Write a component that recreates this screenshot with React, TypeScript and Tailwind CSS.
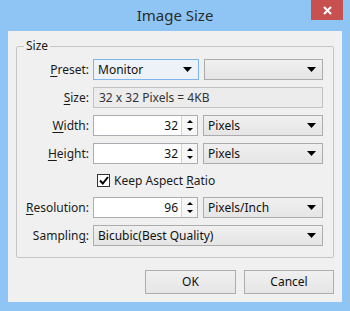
import React from "react";

const font = { fontFamily: '"Noto Sans", "Open Sans", sans-serif' };

function Arrow() {
  return (
    <svg width="9" height="5" viewBox="0 0 9 5" className="shrink-0">
      <path d="M0 0 H9 L4.5 5 Z" fill="#000" />
    </svg>
  );
}

function Label({ text, u, w = "w-[76px]" }: { text: string; u: number; w?: string }) {
  return (
    <span className={`${w} shrink-0 text-right pr-[4px] text-[12px] text-[#1a1a1a]`}>
      {text.slice(0, u)}
      <span className="underline underline-offset-2">{text[u]}</span>
      {text.slice(u + 1)}
    </span>
  );
}

function Combo({ value, w, focused }: { value?: string; w: string; focused?: boolean }) {
  return (
    <div
      className={`${w} h-[21px] flex items-center justify-between pl-[4px] pr-[6px] border text-[12px] text-[#111] ${
        focused ? "border-[#7eb4ea] bg-[#edf2f8]" : "border-[#acacac] bg-gradient-to-b from-[#f0f0f0] to-[#e5e5e5]"
      }`}
    >
      <span>{value}</span>
      <Arrow />
    </div>
  );
}

function Spin({ value }: { value: string }) {
  return (
    <div className="w-[105px] h-[21px] flex border border-[#abadb3] bg-white text-[12px] text-[#111]">
      <div className="flex-1 flex items-center justify-end pr-[3px]">{value}</div>
      <div className="w-[16px] flex flex-col items-center justify-center gap-[5px] border-l border-[#d4d4d4] bg-[#f7f7f7]">
        <svg width="6" height="3" viewBox="0 0 6 3">
          <path d="M0 3 H6 L3 0 Z" fill="#000" />
        </svg>
        <svg width="6" height="3" viewBox="0 0 6 3">
          <path d="M0 0 H6 L3 3 Z" fill="#000" />
        </svg>
      </div>
    </div>
  );
}

export default function App() {
  return (
    <div className="w-[350px] h-[311px] bg-[#8ec5f4] flex flex-col" style={font}>
      <div className="relative h-[31px] flex items-center justify-center">
        <span className="text-[15px] text-[#2b2b2b] -mt-[1px]">Image Size</span>
        <div className="absolute right-[7px] top-0 w-[32px] h-[20px] bg-[#c75050] flex items-center justify-center">
          <svg width="9" height="9" viewBox="0 0 9 9">
            <path d="M1 1 L8 8 M8 1 L1 8" stroke="#fff" strokeWidth="2" />
          </svg>
        </div>
      </div>
      <div className="mx-[8px] h-[271px] bg-[#f0f0f0] flex flex-col px-[8px] pt-[15px] pb-[8px]">
        <div className="relative border border-[#c6c6c6] rounded-[2px] pl-[0px] pt-[12px] pb-[11px] flex flex-col gap-[7px]">
          <span className="absolute left-[7px] -top-[9px] bg-[#f0f0f0] px-[2px] text-[12px] text-[#1a1a1a] leading-[16px]">
            Size
          </span>
          <div className="flex items-center">
            <Label text="Preset:" u={0} />
            <Combo value="Monitor" w="w-[106px]" focused />
            <div className="w-[5px]" />
            <Combo w="w-[119px]" />
          </div>
          <div className="flex items-center">
            <Label text="Size:" u={0} />
            <div className="w-[230px] h-[21px] flex items-center pl-[5px] border border-[#c2c2c2] bg-[#ececec] text-[12px] text-[#333]">
              32 x 32 Pixels = 4KB
            </div>
          </div>
          <div className="flex items-center">
            <Label text="Width:" u={0} />
            <Spin value="32" />
            <div className="w-[5px]" />
            <Combo value="Pixels" w="w-[120px]" />
          </div>
          <div className="flex items-center">
            <Label text="Height:" u={0} />
            <Spin value="32" />
            <div className="w-[5px]" />
            <Combo value="Pixels" w="w-[120px]" />
          </div>
          <div className="h-[19px] flex items-center pl-[80px]">
            <div className="w-[13px] h-[13px] border border-[#333] bg-white flex items-center justify-center">
              <svg width="10" height="9" viewBox="0 0 10 9">
                <path d="M1 4.5 L3.8 7.5 L9 1" stroke="#000" strokeWidth="2" fill="none" />
              </svg>
            </div>
            <span className="ml-[4px] text-[12px] text-[#1a1a1a]">
              Keep Aspect <span className="underline underline-offset-2">R</span>atio
            </span>
          </div>
          <div className="flex items-center">
            <Label text="Resolution:" u={0} />
            <Spin value="96" />
            <div className="w-[5px]" />
            <Combo value="Pixels/Inch" w="w-[120px]" />
          </div>
          <div className="flex items-center">
            <Label text="Sampling:" u={7} />
            <Combo value="Bicubic(Best Quality)" w="w-[230px]" />
          </div>
        </div>
        <div className="mt-auto flex justify-end gap-[8px]">
          <div className="w-[91px] h-[24px] border border-[#adadad] bg-gradient-to-b from-[#f0f0f0] to-[#e5e5e5] flex items-center justify-center text-[12px] text-[#111]">
            OK
          </div>
          <div className="w-[90px] h-[24px] border border-[#adadad] bg-gradient-to-b from-[#f0f0f0] to-[#e5e5e5] flex items-center justify-center text-[12px] text-[#111]">
            Cancel
          </div>
        </div>
      </div>
    </div>
  );
}
